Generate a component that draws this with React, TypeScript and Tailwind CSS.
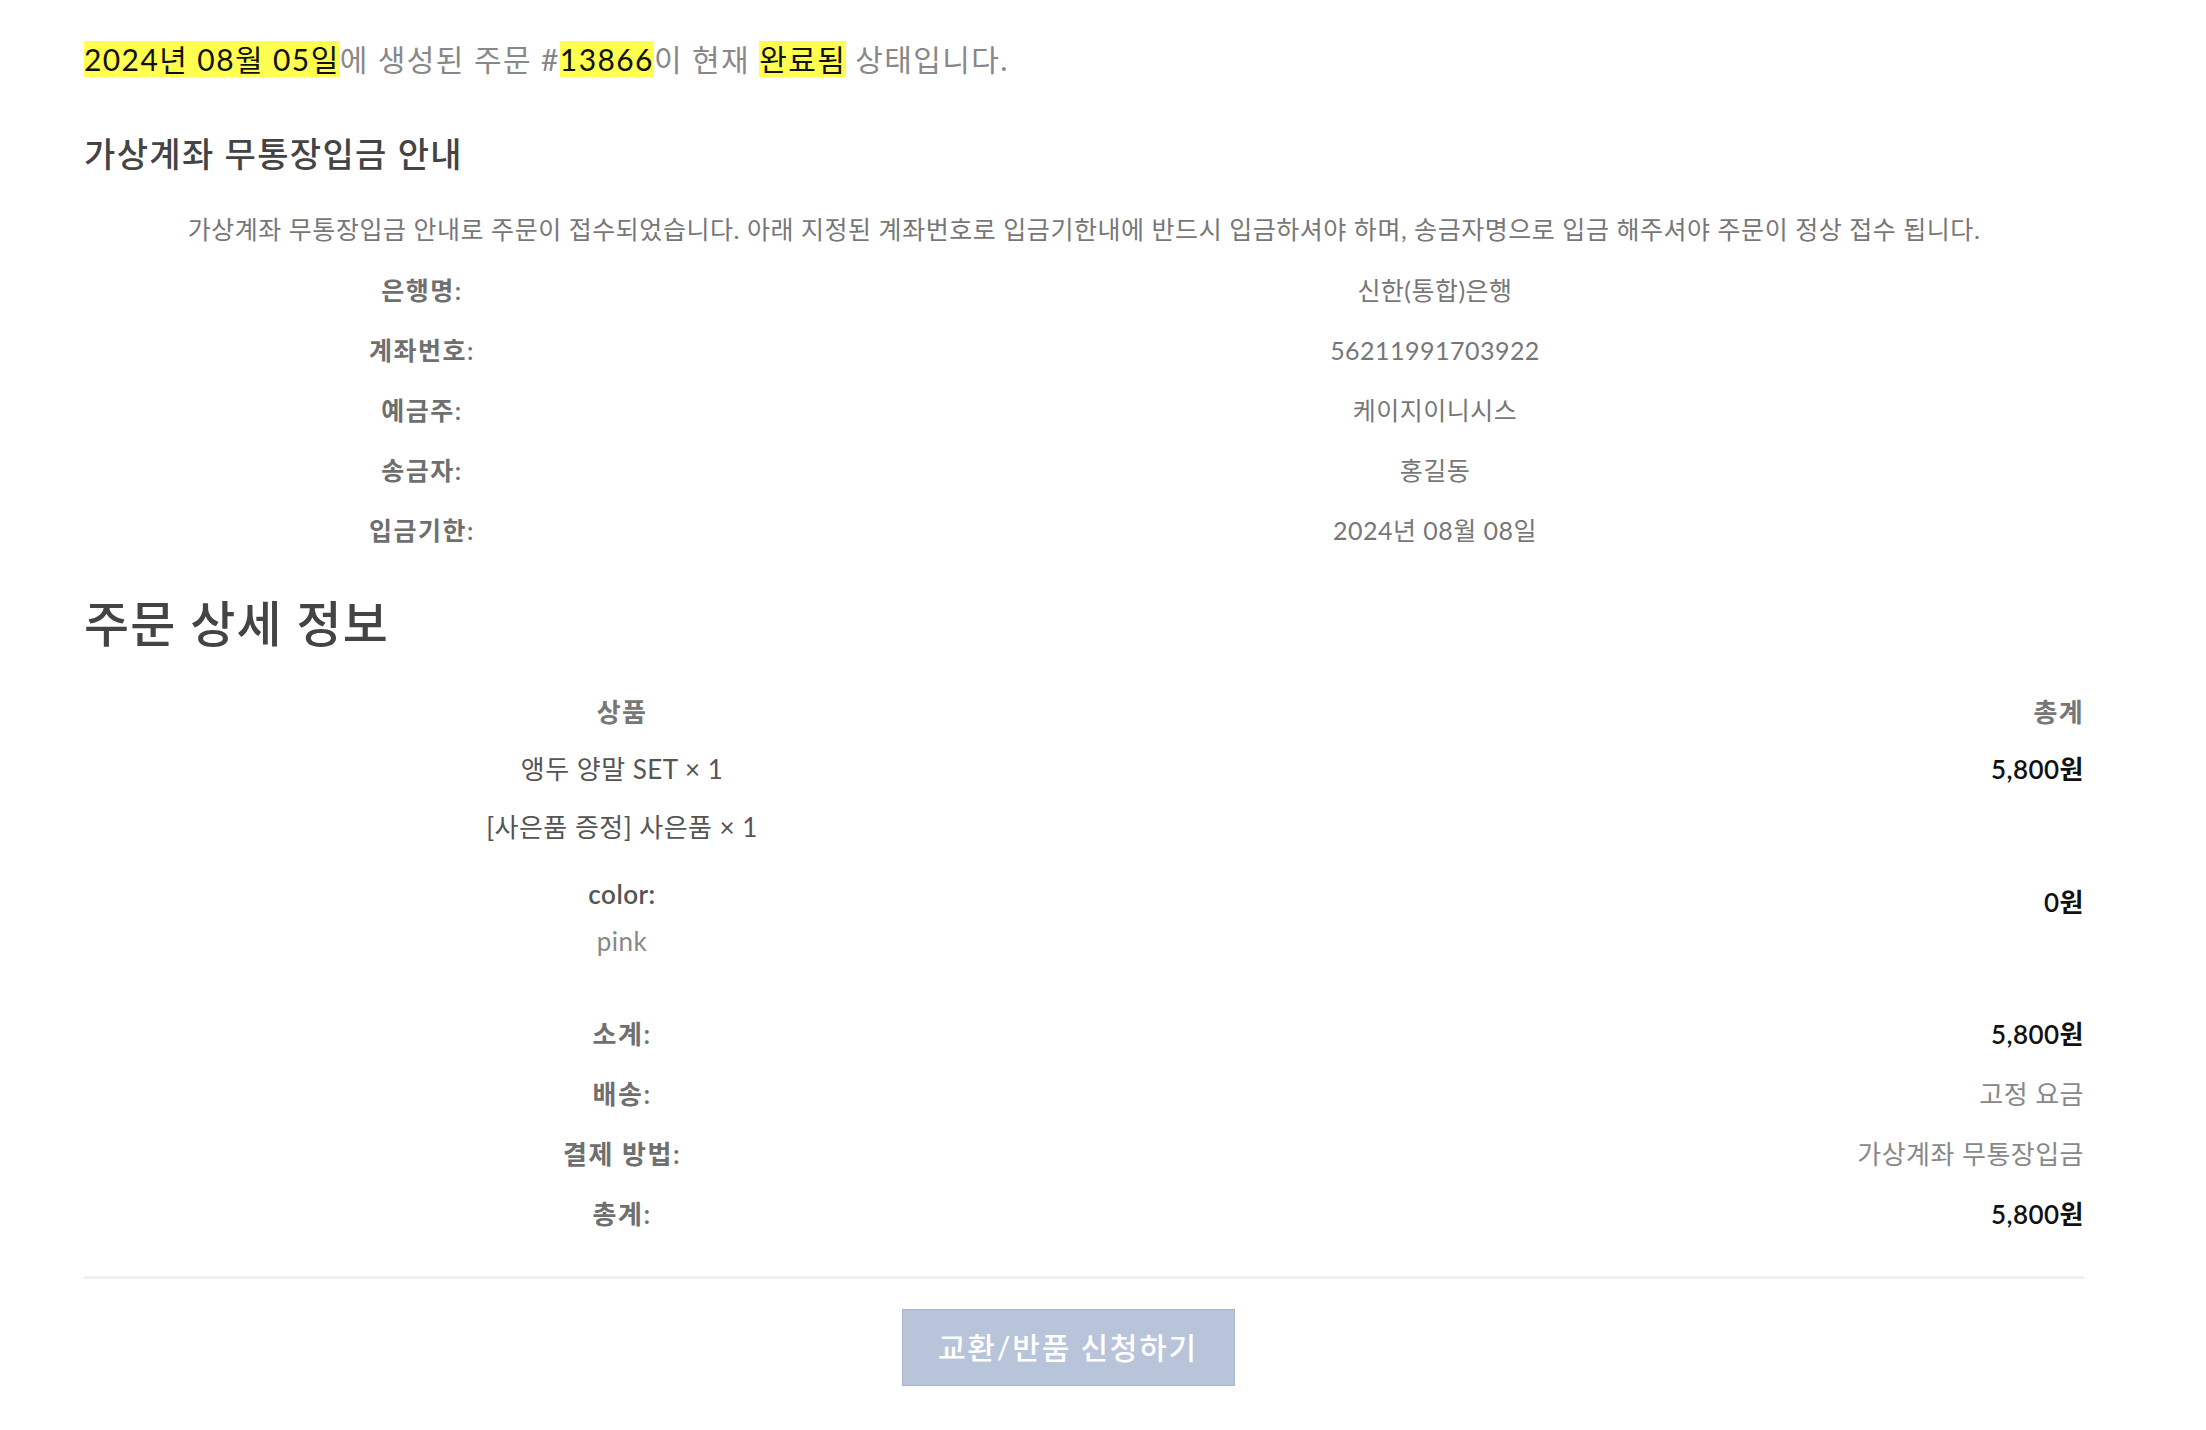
const font = { fontFamily: '"Lato", "Noto Sans CJK KR", sans-serif' };

const bankRows = [
  { label: '은행명:', value: '신한(통합)은행' },
  { label: '계좌번호:', value: '56211991703922' },
  { label: '예금주:', value: '케이지이니시스' },
  { label: '송금자:', value: '홍길동' },
  { label: '입금기한:', value: '2024년 08월 08일' },
];

const totals = [
  { label: '소계:', value: '5,800원', strong: true },
  { label: '배송:', value: '고정 요금', strong: false },
  { label: '결제 방법:', value: '가상계좌 무통장입금', strong: false },
  { label: '총계:', value: '5,800원', strong: true },
];

export default function App() {
  return (
    <div className="min-h-[1430px] bg-white tracking-[0.03em]" style={font}>
      <div className="ml-[84px] w-[2000px]">
        {/* order status line */}
        <p className="mt-[39px] flex h-[40px] items-center text-[30px] tracking-[0.047em] text-[#888]">
          <span>
            <mark className="bg-[#ffff50] text-[#111]">2024년 08월 05일</mark>에 생성된 주문 #
            <mark className="bg-[#ffff50] text-[#111]">13866</mark>이 현재{' '}
            <mark className="bg-[#ffff50] text-[#111]">완료됨</mark> 상태입니다.
          </span>
        </p>

        {/* bank transfer info */}
        <h3 className="mt-[49px] flex h-[50px] items-center text-[34px] font-medium tracking-[0.04em] text-[#444]">
          가상계좌 무통장입금 안내
        </h3>
        <p className="mt-[32px] flex h-[40px] items-center justify-center text-[25px] tracking-[0.022em] text-[#777]">
          가상계좌 무통장입금 안내로 주문이 접수되었습니다. 아래 지정된 계좌번호로 입금기한내에 반드시 입금하셔야 하며, 송금자명으로 입금 해주셔야 주문이 정상 접수 됩니다.
        </p>
        <div className="mt-[11px] grid grid-cols-[676px_1fr] text-[25px]">
          {bankRows.map((r) => (
            <div key={r.label} className="contents">
              <div className="flex h-[60px] items-center justify-center font-semibold tracking-[0.06em] text-[#6f6f6f]">
                {r.label}
              </div>
              <div className="flex h-[60px] items-center justify-center pl-[26px] text-[#777]">
                {r.value}
              </div>
            </div>
          ))}
        </div>

        {/* order details */}
        <h2 className="mt-[31px] flex h-[64px] items-center text-[49px] font-medium tracking-[0.025em] text-[#444]">
          주문 상세 정보
        </h2>
        <div className="mt-[28px] grid grid-cols-[1076px_1fr] text-[26px]">
          <div className="flex h-[56px] items-center justify-center font-semibold tracking-[0.05em] text-[#777]">상품</div>
          <div className="flex h-[56px] items-center justify-end font-semibold tracking-[0.05em] text-[#777]">총계</div>

          <div className="flex h-[58px] items-center justify-center text-[#555]">앵두 양말 SET × 1</div>
          <div className="flex h-[58px] items-center justify-end font-semibold text-[#111]">5,800원</div>

          <div className="flex flex-col items-center pb-[43px]">
            <div className="flex h-[58px] items-center text-[#555]">[사은품 증정] 사은품 × 1</div>
            <div className="mt-[18px] flex h-[40px] items-center font-semibold text-[#555]">color:</div>
            <div className="mt-[7px] flex h-[40px] items-center text-[#888]">pink</div>
          </div>
          <div className="flex items-center justify-end pt-[2px] font-semibold text-[#111]">0원</div>

          {totals.map((t) => (
            <div key={t.label} className="contents">
              <div className="flex h-[60px] items-center justify-center font-semibold tracking-[0.06em] text-[#6f6f6f]">
                {t.label}
              </div>
              <div
                className={
                  t.strong
                    ? 'flex h-[60px] items-center justify-end font-semibold text-[#111]'
                    : 'flex h-[60px] items-center justify-end text-[#888]'
                }
              >
                {t.value}
              </div>
            </div>
          ))}
        </div>

        <div className="mt-[32px] border-t-[3px] border-[#efefef]" />

        <div className="mt-[30px] flex justify-center pr-[32px]">
          <button className="flex h-[77px] w-[333px] items-center justify-center border border-[#a9b6cd] bg-[#b7c4d9] text-[30px] font-medium tracking-[0.06em] text-white">
            교환/반품 신청하기
          </button>
        </div>
      </div>
    </div>
  );
}
